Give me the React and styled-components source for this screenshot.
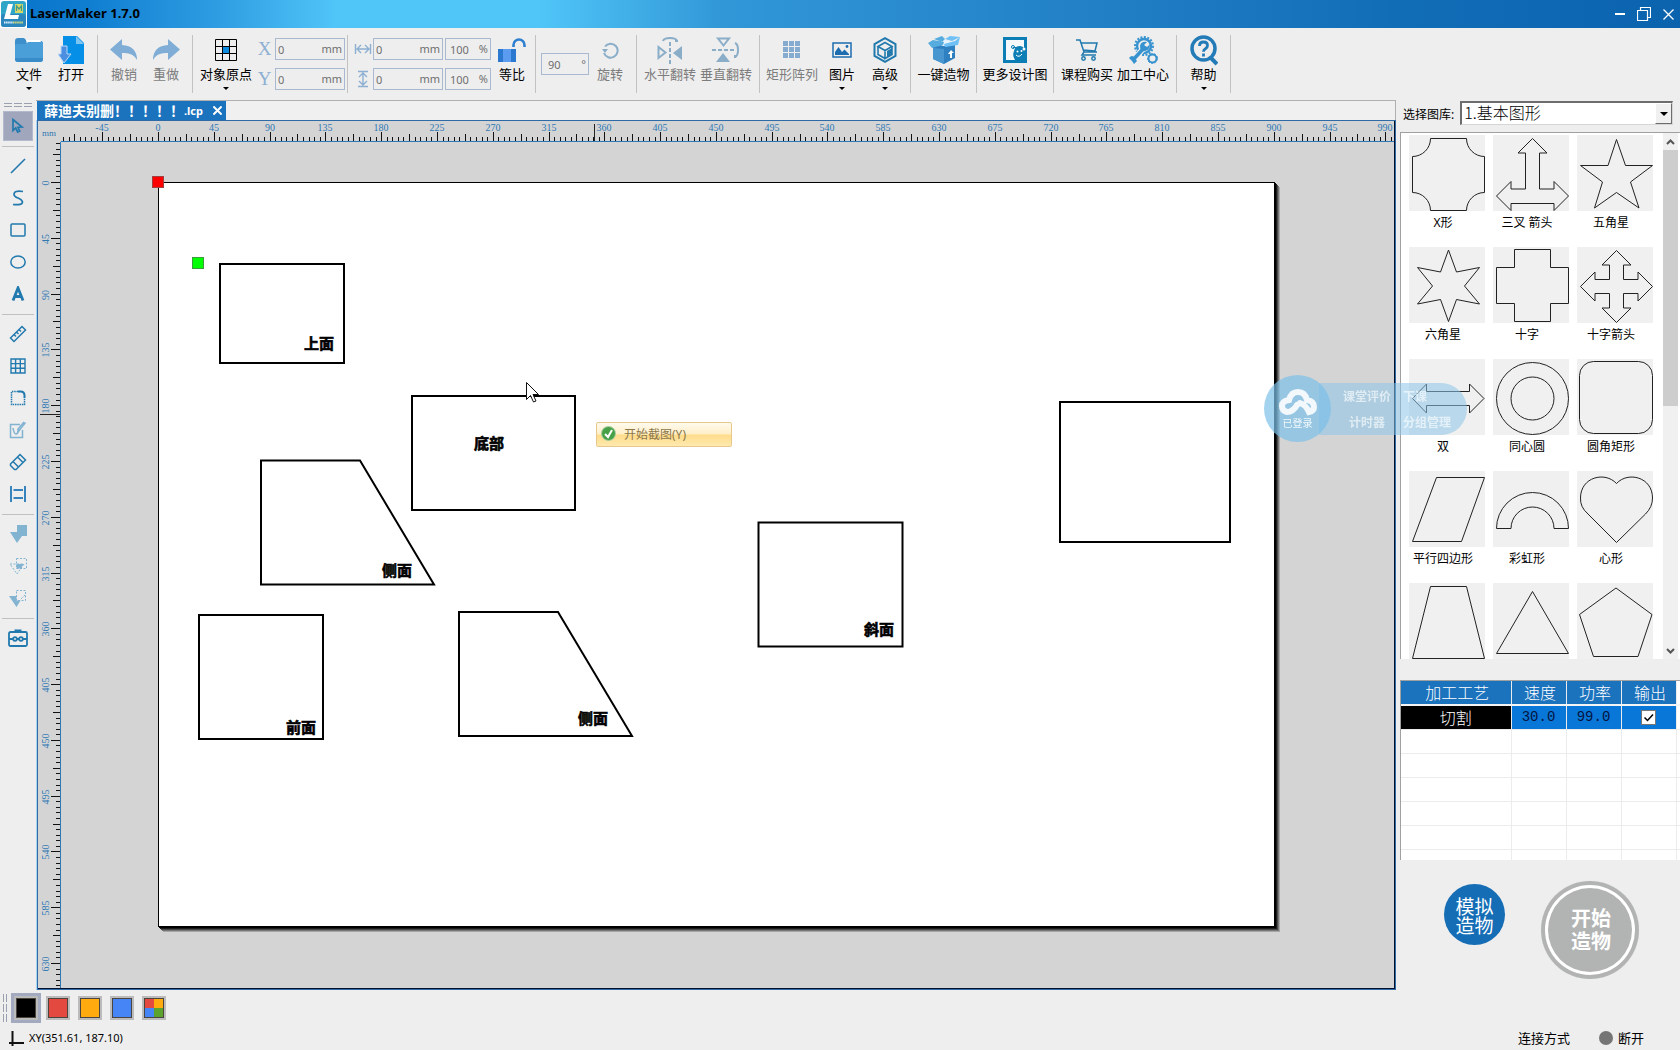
import React, { useId, useState } from "react";
import styled, { createGlobalStyle, css } from "styled-components";

const GlobalStyle = createGlobalStyle`
    * {
        box-sizing: border-box;
    }
    body {
        margin: 0;
        background: #eeeeee;
        color: #000;
        font-family: "Noto Sans", "Noto Sans CJK SC", sans-serif;
        font-size: 13px;
    }
    button, input, select {
        font-family: inherit;
        margin: 0;
    }
    button {
        border: none;
        background: none;
        padding: 0;
        color: inherit;
    }
    svg {
        display: block;
    }
`;

//page frame
const Page = styled.div`
    height: 100vh;
    min-height: 900px;
    display: flex;
    flex-direction: column;
    overflow: hidden;
`;

const Main = styled.main`
    flex: 1;
    min-height: 0;
    display: flex;
`;

//title bar
const TitleBar = styled.header`
    height: 28px;
    flex: none;
    display: flex;
    align-items: flex-start;
    background: linear-gradient(90deg, #0873ca 0%, #0f7dd0 5%, #2f9de2 13%, #50c5f8 20%, #50c6f8 32%, #3197d7 43%, #1f7dc4 68%, #126db7 83%, #0b63ae 100%);
`;

const AppIcon = styled.span`
    width: 27px;
    height: 28px;
    padding: 1px;
    background: #fff;
`;

const AppTitle = styled.h1`
    flex: 1;
    margin: 0 0 0 3px;
    font-size: 13px;
    line-height: 26px;
    font-weight: 700;
`;

const WindowButtons = styled.div`
    display: flex;
    gap: 4px;
    padding-right: 2px;
`;

const WindowButton = styled.button`
    width: 20px;
    height: 28px;
    display: grid;
    place-items: center;
    color: #fff;
`;

//tool bar
const ToolBar = styled.nav`
    height: 72px;
    flex: none;
    display: flex;
    align-items: flex-start;
    padding: 7px 0 0 3px;
`;

const ToolGroup = styled.div`
    height: 58px;
    flex: none;
    display: flex;
    padding: 0 ${({ $tight }) => ($tight ? 2 : 5)}px 0 5px;
    border-right: 1px solid #c2c2c2;
`;

const ToolButton = styled.button`
    width: ${({ $width }) => $width || 42}px;
    height: 58px;
    display: flex;
    flex-direction: column;
    align-items: center;
    white-space: nowrap;
    font-size: 13px;
    line-height: 18px;
    color: ${({ disabled }) => (disabled ? "#7d7d7d" : "#000")};
`;

const ToolIcon = styled.span`
    height: 30px;
    display: grid;
    place-items: center;
`;

const DropArrow = styled.span`
    border: 3px solid transparent;
    border-top-color: #000;
    border-bottom: none;
    margin-top: 4px;
`;

const FieldRows = styled.div`
    display: flex;
    flex-direction: column;
    gap: 8px;
    padding-top: 3px;
`;

const FieldRow = styled.div`
    display: flex;
    gap: 2px;
`;

const AxisLabel = styled.label`
    width: ${({ $width }) => $width}px;
    margin-right: -2px;
    display: grid;
    place-items: center;
    color: #8db0d2;
    font: 19px/22px "Liberation Serif", serif;
`;

const FieldBox = styled.span`
    width: ${({ $width }) => $width}px;
    height: 22px;
    display: flex;
    align-items: center;
    padding: 0 2px 0 ${({ $inset }) => $inset || 2}px;
    border: 1px solid #a9bad0;
    color: #6e6e6e;
    font-size: 11px;
    line-height: 20px;
`;

const FieldInput = styled.input`
    flex: 1;
    min-width: 0;
    width: 0;
    padding: 0;
    border: none;
    outline: none;
    background: none;
    color: inherit;
    font-size: 11px;
`;

const AngleSlot = styled.div`
    padding-top: 18px;
`;

//left strip
const SideStrip = styled.aside`
    width: 36px;
    flex: none;
    display: flex;
    flex-direction: column;
    align-items: center;
    padding-top: 2px;
`;

const SideButton = styled.button`
    width: 30px;
    height: 32px;
    display: grid;
    place-items: center;
    color: ${({ disabled }) => (disabled ? "#82b4d2" : "#2179ae")};
    ${({ $active }) =>
        $active &&
        css`
            background: #a0a6bb;
            height: 30px;
            margin: 1px 0;
            outline: 1px solid #b4bacd;
            outline-offset: -1px;
        `}
`;

const SideRule = styled.hr`
    width: 32px;
    height: 1px;
    margin: 4px 0 3px;
    border: none;
    background: #c0c0c0;
`;

const Grip = styled.div`
    height: 8px;
`;

//document
const Doc = styled.section`
    flex: 1;
    min-width: 0;
    display: flex;
    flex-direction: column;
    border-top: 1px solid #b0b0b0;
`;

const TabBar = styled.div`
    height: 19px;
    flex: none;
    display: flex;
    padding-left: 1px;
    border-right: 1px solid #b0b0b0;
    background: #f0f0f0;
`;

const Tab = styled.div`
    display: flex;
    align-items: center;
    width: 189px;
    padding: 0 4px 0 7px;
    background: #1b72bd;
    color: #fff;
    font-size: 14px;
    font-weight: 700;
    line-height: 19px;
    white-space: nowrap;
`;

const TabSuffix = styled.small`
    flex: 1;
    font-size: 11px;
`;

const DocGrid = styled.div`
    flex: 1;
    min-height: 0;
    margin-left: 1px;
    padding: 0 1px 1px 0;
    display: grid;
    grid-template: 21px 1fr / 23px 1fr;
    border: 1px solid #2e6ba6;
    background: #d4d4d4;
    box-shadow: -1px 0 #a8d4f4, inset -1px -1px #04102c;
`;

const RulerCorner = styled.div`
    padding: 4px 0 0 4px;
    color: #2e78b4;
    font: 9px/16px "Liberation Serif", serif;
`;

const HRuler = styled.svg`
    width: 100%;
    height: 21px;
    overflow: hidden;
    border-bottom: 1px solid #2e78b4;
`;

const VRuler = styled.svg`
    width: 23px;
    height: 100%;
    overflow: hidden;
    border-right: 1px solid #2e78b4;
`;

const RulerText = styled.text`
    fill: #2e78b4;
    font: 10px "Liberation Serif", serif;
    text-anchor: middle;
`;

const Workspace = styled.div`
    position: relative;
    overflow: hidden;
`;

const Paper = styled.div`
    position: absolute;
    left: 97px;
    top: 40px;
    width: 1117px;
    height: 745px;
    background: #fff;
    border: 1px solid #000;
    box-shadow: 1px 1px #000, 2px 2px #1c1c1c, 3px 3px #494949, 4px 4px #767676, 5px 5px #a6a6a6;
`;

const Drawing = styled.svg`
    width: 100%;
    height: 100%;
    overflow: visible;
`;

const ShapeLabel = styled.text`
    font: 700 15px "Noto Sans CJK SC", sans-serif;
    text-anchor: middle;
`;

const CapturePopup = styled.button`
    position: absolute;
    left: 535px;
    top: 280px;
    width: 136px;
    height: 25px;
    display: flex;
    align-items: center;
    gap: 8px;
    padding: 0 4px 2px;
    border: 1px solid #e6c88c;
    border-radius: 2px;
    background: linear-gradient(#fffaee 0%, #ffefc8 48%, #ffdc8a 52%, #ffe9ae 100%);
    color: #8c7748;
    font-size: 12px;
`;

//cloud widget that floats over the document and the panel
const CloudWidget = styled.div`
    position: fixed;
    top: 375px;
    right: 213px;
    width: 203px;
    height: 67px;
    display: flex;
    align-items: center;
    color: #f2f8fc;
    font-size: 12px;
    z-index: 2;
`;

const CloudButton = styled.button`
    width: 67px;
    height: 67px;
    flex: none;
    display: flex;
    flex-direction: column;
    align-items: center;
    justify-content: center;
    border-radius: 50%;
    background: rgba(126, 192, 234, 0.7);
    color: #f2f8fc;
    font-size: 10px;
    line-height: 14px;
    z-index: 1;
`;

const CloudMenu = styled.div`
    flex: 1;
    height: 52px;
    margin-left: -12px;
    padding-left: 12px;
    display: grid;
    grid-template-columns: 72px 1fr;
    border-radius: 0 26px 26px 0;
    background: rgba(140, 196, 232, 0.55);
`;

const CloudItem = styled.button`
    font-size: 12px;
    font-weight: 700;
    text-align: ${({ $left }) => ($left ? "left" : "center")};
    color: rgba(255, 255, 255, 0.62);
`;

//right panel
const Panel = styled.aside`
    width: 280px;
    flex: none;
    margin-left: 4px;
    padding-top: 1px;
    display: flex;
    flex-direction: column;
`;

const LibraryRow = styled.div`
    display: flex;
    height: 24px;
    gap: 6px;
    padding: 0 7px 0 3px;
    font-size: 12px;
    line-height: 28px;
    white-space: nowrap;
`;

const SelectBox = styled.div`
    flex: 1;
    height: 24px;
    display: flex;
    border: 2px solid #6d6d6d;
    border-right: 1px solid #d6d6d6;
    border-bottom: 1px solid #d6d6d6;
    background: #fff;
`;

const LibrarySelect = styled.select`
    flex: 1;
    min-width: 0;
    appearance: none;
    border: none;
    outline: none;
    background: none;
    padding: 0 0 3px 2px;
    color: #000;
    font: 300 16px/18px "Noto Sans CJK SC", sans-serif;
`;

const SelectArrow = styled.span`
    width: 17px;
    display: grid;
    place-items: center;
    background: #f0f0f0;
    border: 1px solid #fff;
    border-right-color: #6d6d6d;
    border-bottom-color: #6d6d6d;
    pointer-events: none;

    &::after {
        content: "";
        border: 4px solid transparent;
        border-top-color: #000;
        border-bottom: none;
    }
`;

const Gallery = styled.div`
    height: 527px;
    flex: none;
    margin-top: 7px;
    display: flex;
    border-top: 1px solid #a0a0a0;
    border-left: 1px solid #a0a0a0;
    background: #fff;
    overflow: hidden;
`;

const TileGrid = styled.div`
    flex: 1;
    display: grid;
    grid-template-columns: repeat(3, 84px);
    grid-auto-rows: 112px;
    padding-top: 2px;
`;

const Tile = styled.button`
    display: flex;
    flex-direction: column;
    align-items: center;
    font-size: 12px;
    line-height: 24px;
    white-space: pre;
`;

const TileArt = styled.svg`
    width: 76px;
    height: 76px;
    align-self: flex-end;
    background: #f0f0f0;
    fill: none;
    stroke: #222;
    stroke-width: 1;
`;

const ScrollBar = styled.div`
    width: 17px;
    padding-right: 2px;
    display: flex;
    flex-direction: column;
`;

const ScrollArrow = styled.button`
    height: 17px;
    display: grid;
    place-items: center;
    background: #f0f0f0;
    color: #555;
`;

const ScrollTrack = styled.div`
    flex: 1;
    background: #f0f0f0;

    &::before {
        content: "";
        display: block;
        height: 52%;
        background: #cdcdcd;
    }
`;

const CraftBox = styled.div`
    height: 180px;
    flex: none;
    margin-top: 21px;
    border-top: 1px solid #a0a0a0;
    border-left: 1px solid #a0a0a0;
    background: #fff;
    overflow: hidden;
`;

const CraftTable = styled.table`
    width: 100%;
    table-layout: fixed;
    border-collapse: collapse;
    font: 300 16px/22px "Noto Sans CJK SC", sans-serif;
    text-align: center;

    th, td {
        height: 24px;
        padding: 0;
        border-right: 1px solid #ececec;
        border-bottom: 1px solid #ececec;
    }
    th {
        padding: 0 0 2px 3px;
        line-height: 20px;
        font-weight: 300;
        color: #fff;
        background: #1b72bd;
        border-bottom: 2px solid #f4f4f4;
    }
    th:last-child, td:last-child {
        background: #fff;
        border-right: none;
    }
`;

const CraftCell = styled.td`
    background: ${({ $dark }) => ($dark ? "#000" : "#0877d8")};
    color: ${({ $dark }) => ($dark ? "#fff" : "#051440")};
    font-family: ${({ $dark }) => ($dark ? "inherit" : '"Liberation Mono", monospace')};
    font-size: ${({ $dark }) => ($dark ? 16 : 14)}px;
    font-weight: 300;
`;

const OutputCheck = styled.input`
    appearance: none;
    display: block;
    width: 13px;
    height: 13px;
    margin: 0 auto;
    background: #fff;
    outline: 1px solid #777;

    &:checked {
        background: #fff url("data:image/svg+xml,%3Csvg xmlns='http://www.w3.org/2000/svg' viewBox='0 0 13 13'%3E%3Cpath d='M2.5 6.5l3 3 5.500-6' fill='none' stroke='%23000' stroke-width='1.500'/%3E%3C/svg%3E");
    }
`;

const ActionRow = styled.div`
    display: flex;
    align-items: flex-start;
    gap: 36px;
    padding: 21px 0 0 44px;
`;

const SimulateButton = styled.button`
    width: 61px;
    height: 61px;
    margin-top: 3px;
    border-radius: 50%;
    background: #146db5;
    color: #fff;
    font: 400 19px/19px "Noto Sans CJK SC", sans-serif;
`;

const StartButton = styled.button`
    width: 98px;
    height: 98px;
    padding: 0 0 3px 2px;
    border-radius: 50%;
    background: #b2b4b4;
    box-shadow: inset 0 0 0 4px #b2b4b4, inset 0 0 0 7px #fff;
    color: #fff;
    font: 700 20px/23px "Noto Sans CJK SC", sans-serif;
`;

//bottom bars
const PaletteBar = styled.div`
    height: 38px;
    flex: none;
    display: flex;
    align-items: center;
    gap: 2px;
    padding: 0 0 2px 3px;
`;

const PaletteGrip = styled.span`
    width: 6px;
    height: 28px;
`;

const SwatchButton = styled.button`
    width: 30px;
    height: 30px;
    padding: 3px;
    background: ${({ $active }) => ($active ? "#a3a9be" : "none")};
`;

const Swatch = styled.span`
    display: block;
    width: 24px;
    height: 24px;
    border: 2px solid #bbb;
    background: ${({ $paint }) => $paint};
    box-shadow: inset 0 0 0 1px #4a453f;
`;

const StatusBar = styled.footer`
    height: 22px;
    flex: none;
    display: flex;
    align-items: center;
    padding: 0 36px 2px 9px;
    font-size: 13px;
    line-height: 18px;
`;

const Coordinates = styled.span`
    flex: 1;
    padding-left: 5px;
    font-size: 11px;
`;

const StatusDot = styled.i`
    width: 14px;
    height: 14px;
    margin: 0 5px 0 29px;
    border-radius: 50%;
    background: #757575;
`;

//ruler data: 45 mm take 55.79 px, with ten ticks between two numbers
const STEP = 5.579;

function Ticks({ vertical, origin, from, to, cursor }) {
    const items = [];
    for (let i = from; i <= to; i++) {
        const at = Math.round(origin + i * STEP) + 0.5;
        const len = i % 10 === 0 ? 9 : i % 5 === 0 ? 7 : 4;
        items.push(vertical ? `M${22 - len} ${at}H22` : `M${at} ${20 - len}V20`);
    }
    const labels = [];
    for (let i = Math.ceil(from / 10); i * 10 <= to; i++) {
        const at = Math.round(origin + i * 10 * STEP);
        labels.push(
            vertical ? (
                <RulerText key={i} transform={`translate(11 ${at + 1}) rotate(-90)`}>{i * 45}</RulerText>
            ) : (
                <RulerText key={i} x={at} y={10}>{i * 45}</RulerText>
            )
        );
    }
    return (
        <>
            <path d={items.join("")} stroke="#111" fill="none" />
            <path d={vertical ? `M2 ${cursor}H22` : `M${cursor} 3V20`} stroke="#222" />
            {labels}
        </>
    );
}

//icons
const blue = "#2179ae";
const pale = "#8aadc8";

const Icon = ({ w = 24, h = w, box, children, ...rest }) => (
    <svg width={w} height={h} viewBox={box || `0 0 ${w} ${h}`} fill="none" stroke="currentColor" aria-hidden="true" {...rest}>
        {children}
    </svg>
);

const LogoIcon = () => (
    <Icon w={25} h={26} stroke="none">
        <rect width="25" height="26" rx="3" fill="#2fa5c8" />
        <rect y="13" width="25" height="13" rx="3" fill="#2b86bd" />
        <path d="M7 3h5l-3 11h9l-1 4H3z" fill="#fff" />
        <rect x="14" y="3" width="8" height="9" fill="#d6d66a" />
        <path d="M15.500 10V5l2.500 3 2.500-3v5" stroke="#3f9a8a" strokeWidth="1.200" />
        <path d="M3 21.500h9" stroke="#dff4ff" strokeWidth="2" strokeDasharray="1.500 .6" />
        <path d="M12 21.500h10" stroke="#d8dc7a" strokeWidth="2" strokeDasharray="1.500 .6" />
    </Icon>
);

const FolderIcon = () => (
    <Icon w={28} h={24} stroke="none">
        <path d="M0 3q0-3 3-3h6l3 3h14q2 0 2 3v6H0z" fill="#3d8fcb" />
        <path d="M11 2h14l2 4H12z" fill="#fff" />
        <path d="M0 8q0-2 2-2h9l2-2h13q2 0 2 2v15q0 3-3 3H3q-3 0-3-3z" fill="#4a9fd8" />
        <path d="M0 20h28v1q0 3-3 3H3q-3 0-3-3z" fill="#3a8cc8" />
    </Icon>
);

const OpenIcon = () => (
    <Icon w={26} h={28} stroke="none">
        <path d="M5 0h14l7 7v21H5z" fill="#068fe6" />
        <path d="M18 0l8 8h-8z" fill="#7cc4f2" />
        <path d="M3 10h6v8h4L6 27l-6-9h3z" fill="#4c8ee0" stroke="#b8d8f6" />
    </Icon>
);

const UndoIcon = ({ flip }) => (
    <Icon w={28} h={22} stroke="none" style={{ transform: flip ? "scaleX(-1)" : "none" }}>
        <path d="M12 0v6q15 1 15 15-4-8-15-7v7L0 10.500z" fill="#80add5" />
    </Icon>
);

const OriginIcon = () => (
    <Icon w={22}>
        <rect x="7.500" y="7.500" width="7" height="7" fill="#0c8ce0" stroke="none" />
        <path d="M.5.5h21v21H.5zM7.500.5v21M14.500.5v21M.5 7.500h21M.5 14.500h21" />
    </Icon>
);

const WidthIcon = ({ vertical }) => (
    <Icon w={18} style={{ transform: vertical ? "rotate(90deg)" : "none" }} stroke="#8db0d2" strokeWidth="1.400">
        <path d="M1.500 4v10M16.500 4v10M3 9h12M7 5L3 9l4 4M11 5l4 4-4 4" />
    </Icon>
);

const LockIcon = () => (
    <Icon w={28} h={24}>
        <path d="M15.500 9V7a5.500 5.500 0 0 1 11 0v2" stroke="#2f7fd0" strokeWidth="2.600" />
        <rect y="11" width="18" height="13" fill="#2a78d0" stroke="none" />
        <rect x="5" y="11" width="8" height="13" fill="#5c9cf0" stroke="none" />
    </Icon>
);

const RotateIcon = () => (
    <Icon w={18} stroke={pale} strokeWidth="2">
        <path d="M4 5.500A7 7 0 1 1 3 12" />
        <path d="M1 8h6L4 12z" fill={pale} stroke="none" />
    </Icon>
);

const FlipIcon = ({ vertical }) => (
    <Icon w={28} stroke={pale} strokeWidth="2" style={{ transform: vertical ? "rotate(90deg)" : "none" }}>
        <path d="M2.500 11v11l7-5.500z" />
        <path d="M26 10v14l-9-7z" fill={pale} stroke="none" />
        <path d="M14 6v22" strokeDasharray="4 2" />
        <path d="M7 5q1-3 7-3t7 3M19 5h3" />
    </Icon>
);

const ArrayIcon = () => (
    <Icon w={18} stroke="none" fill="#86abd0">
        {[0, 6, 12].map((y) => [0, 6, 12].map((x) => <rect key={x + "-" + y} x={x} y={y} width="5" height="5" />))}
    </Icon>
);

const PictureIcon = () => (
    <Icon w={20} h={16} stroke="#1e6cb0">
        <rect x="1" y="1" width="18" height="14" strokeWidth="1.500" />
        <path d="M3 13V10l3.500-5 3.500 5 2.500-2.500L17 12v1z" fill="#1e6cb0" stroke="none" />
        <circle cx="15" cy="4.500" r="1.400" fill="#1e6cb0" stroke="none" />
    </Icon>
);

const CubeIcon = () => (
    <Icon w={24} h={26} stroke={blue} strokeWidth="2">
        <path d="M12 1.200l10.500 5.800v12L12 24.800 1.500 19V7z" />
        <path d="M5 9.500l7-4 7 4-7 4zM5 9.500v8l7 4M12 13.500v8l7-4v-8" strokeWidth="1.600" />
        <path d="M14 14l5-3v6l-5 3z" fill={blue} stroke="none" />
    </Icon>
);

const BoxIcon = () => (
    <Icon w={32} h={28} stroke="none">
        <path d="M5 7l11 3 11-3v15l-11 6-11-5z" fill="#2f80c0" />
        <path d="M6 7l10-4 10 4-10 3z" fill="#e8f3fb" />
        <path d="M5 4L0 7l4 5 11-3 1-3zM6 3l8-3 3 3-3 3z" fill="#56acde" />
        <path d="M27 5l5-4-2 8-13 2-1-3zM17 3l5-3 10 1-8 4z" fill="#6fc1f5" />
        <path d="M5 12l11 1v15L5 23z" fill="#4796cf" />
        <path d="M23 14l3 3h-2v5h-2v-4h-2z" fill="#fff" />
    </Icon>
);

const MoreIcon = () => (
    <Icon w={24} h={26} stroke="none">
        <rect width="24" height="26" fill="#0c7db5" />
        <path d="M3 3h18v8q-2-2-4-2-5 0-6 5-2 5 1 9H3z" fill="#f4f8fb" />
        <path d="M10 10.500h5" stroke="#0c7db5" />
        <circle cx="10" cy="10" r="1.500" stroke="#0c7db5" />
        <circle cx="21" cy="12" r="1.500" fill="#f4f8fb" />
        <circle cx="14.500" cy="14.500" r="1" fill="#fff" />
        <circle cx="18.500" cy="14" r="1" fill="#fff" />
        <path d="M13 18q3 3 6-1" stroke="#fff" />
    </Icon>
);

const CartIcon = () => (
    <Icon w={23} h={22} stroke="#2179ae" strokeWidth="1.500">
        <path d="M0 1h4l4 12h13M5 4h16l-2 8L7 11M8 13l-2 3h14" />
        <circle cx="7.500" cy="19.500" r="1.700" />
        <circle cx="17.500" cy="19.500" r="1.700" />
    </Icon>
);

const GearIcon = () => (
    <Icon w={29} h={28} stroke="#3793cf">
        <circle cx="15" cy="10" r="9" strokeWidth="2" strokeDasharray="2 1.500" />
        <circle cx="15" cy="10" r="7" strokeWidth="2.500" />
        <path d="M4 24L14 13" strokeWidth="6" stroke="#eee" />
        <path d="M4 24L14 13" strokeWidth="3.500" />
        <path d="M11 10q0 6 5 5t5-7l-3 3-3-2 3-3q-6-1-7 4zM0 22q3-4 6 0l2 3-3 3-2-3z" fill="#3793cf" stroke="none" />
        <circle cx="23.500" cy="22.500" r="4" fill="#eee" strokeWidth="2" />
        <circle cx="23.500" cy="22.500" r="5" strokeDasharray="2 1.500" />
    </Icon>
);

const HelpIcon = () => (
    <Icon w={28} h={31} stroke="#237bb8" strokeWidth="3.500">
        <circle cx="13.500" cy="13.500" r="11.500" />
        <path d="M21 23l6 6" strokeWidth="4" />
        <path d="M9.500 11q0-4 4-4t4 3.500q0 2-2 3.200t-2 3M13.500 18.500v3" strokeWidth="2.800" />
    </Icon>
);

const MinimizeIcon = () => (
    <Icon w={10}><path d="M0 5h10" strokeWidth="2" /></Icon>
);

const RestoreIcon = () => (
    <Icon w={14}><path d="M3.500 3.500v-3h10v10h-3M.5 3.500h10v10H.5z" strokeWidth="1.200" /></Icon>
);

const CloseIcon = ({ size = 11, weight = 1.3 }) => (
    <Icon w={size} box="0 0 11 11"><path d="M.5.5l10 10M10.500.5l-10 10" strokeWidth={weight} /></Icon>
);

const sideIcons = {
    pointer: <Icon w={16} strokeWidth="1.700"><path d="M3 1.500v11l2.700-2.500 2 4 2-1-1.800-3.800L12 9z" /></Icon>,
    line: <Icon w={16} strokeWidth="1.600"><path d="M1 15L15 1" /></Icon>,
    curve: <Icon w={16} strokeWidth="1.700"><path d="M13 1.500Q4 0 4 4.500q0 2 4 3.500t4.500 4q0 3.500-9.500 2.500" /></Icon>,
    rect: <Icon w={16} strokeWidth="1.500"><rect x="1" y="2" width="14" height="12" rx="1" /></Icon>,
    ellipse: <Icon w={16} strokeWidth="1.500"><ellipse cx="8" cy="8" rx="7.200" ry="6" /></Icon>,
    text: <Icon w={16} strokeWidth="2.800"><path d="M3 14.500L8 2l5 12.500M5 10.500h6" /></Icon>,
    ruler: <Icon w={18} strokeWidth="1.500"><path d="M1.500 13L13 1.500 16.500 5 5 16.500zM5.500 10l1.500 1.500M8 7.500L9.500 9M10.500 5L12 6.500" /></Icon>,
    grid: <Icon w={16} strokeWidth="1.400"><path d="M1 1h14v14H1zM1 5.600h14M1 10.300h14M5.600 1v14M10.300 1v14" /></Icon>,
    corner: <Icon w={16}><path d="M8 1.500h2.500q4 0 4 4V8" strokeWidth="2" /><path d="M8 1.500H1.500v13h13V8" strokeWidth="1.500" strokeDasharray="1.500 .8" /></Icon>,
    edit: <Icon w={18} strokeWidth="1.500"><path d="M11 3.500H1.500v13h12V9M4 7q1 6 3 6t3-5" /><path d="M16.500 1.500L9 11M9 11V8l6-7" /></Icon>,
    eraser: <Icon w={18} strokeWidth="1.500"><path d="M1.500 11L11 1.500 16.500 7 7 16.500H5.500L1.500 12.500zM4 8.500L9.500 14M8.500 4L14 9.500" /></Icon>,
    spacing: <Icon w={16} stroke="#3683bd" strokeWidth="2"><path d="M1 0v16M15 0v16M3.500 4h9.500M3.500 12h9.500" /></Icon>,
    union: <Icon w={18} stroke="none" fill="currentColor"><path d="M8 0h10v11h-5l-5 7L1 7h7z" /></Icon>,
    intersect: <Icon w={18} strokeDasharray="2 1.500"><path d="M7.500 1.500h10v10h-10zM1 7h14L8 17z" /><path d="M7.500 7H15l-3.500 4.500h-4z" fill="currentColor" stroke="none" /></Icon>,
    subtract: <Icon w={18}><path d="M7.500 1.500h9v10h-9zM16 6l-6 6" strokeDasharray="2 1.500" /><path d="M0 7h7.500v4.500h4L7.500 18z" fill="currentColor" stroke="none" /></Icon>,
    toolbox: <Icon w={20} h={18} strokeWidth="1.800"><rect x="1" y="3" width="18" height="14" rx="1.500" /><path d="M6.500 1.500h7M1 10h4M9 10h2M15 10h4" /><circle cx="7" cy="10" r="1.800" /><circle cx="13" cy="10" r="1.800" /></Icon>,
};

const sideGroups = [
    [["pointer", "选择"]],
    [["line", "直线"], ["curve", "曲线"], ["rect", "矩形"], ["ellipse", "椭圆"], ["text", "文字"]],
    [["ruler", "测量"], ["grid", "网格"], ["corner", "圆角"], ["edit", "编辑", true], ["eraser", "橡皮"], ["spacing", "间距"]],
    [["union", "并集", true], ["intersect", "交集", true], ["subtract", "差集", true]],
    [["toolbox", "工具箱"]],
];

const tiles = [
    ["X形", <path d="M21.500 3.500h36a18 18 0 0 0 18 18v36a18 18 0 0 0-18 18h-36a18 18 0 0 0-18-18v-36a18 18 0 0 0 18-18z" />],
    ["三叉 箭头", <path d="M39.500 3.500L54 18h-7.500v36H61v-7.500L75.500 61 61 75.500V68.500H18v7L3.500 61 18 46.500V54h14.500V18H25z" />],
    ["五角星", <path d="M39.500 4.500l9 26H75.500L53.500 47 62 73 39.500 57.500 17.500 73 25.500 47 3.500 30.500H31z" />],
    ["六角星", <path d="M39.500 3l8 22 23-4.500L55.500 39l15 18-23-4.500-8 22-8-22L8.500 57l15-18-15-18.500 23 4.500z" />],
    ["十字", <path d="M21.500 2.500h36v18h18v36h-18v18h-36v-18h-18v-36h18z" />],
    ["十字箭头", <path d="M39.500 3.500L54 18h-7.500v14.500H61V25l14.500 14.500L61 54v-7.500H46.500V61H54L39.500 75.500 25 61h7.500V46.500H18V54L3.500 39.500 18 25v7.500h14.500V18H25z" />],
    ["双", <path d="M3.500 39.500L17.500 25v7.500h43V25L75 39.500 60.500 54v-7.500h-43V54z" />],
    ["同心圆", <><circle cx="39.500" cy="39.500" r="36" /><circle cx="39.500" cy="39.500" r="21.500" /></>],
    ["圆角矩形", <rect x="2.500" y="2.500" width="73" height="72" rx="14" />],
    ["平行四边形", <path d="M27.500 6.500h48l-23 64h-49z" />],
    ["彩虹形", <path d="M3.500 57.500a36 36 0 0 1 72 0H61a21.500 21.500 0 0 0-43 0z" />],
    ["心形", <path d="M39.500 12.500C51 0 75.500 6 75.500 27q0 9-7 16l-29 28.500L11 43q-8-7-7.500-16C3.500 6 28 0 39.500 12.500z" />],
    ["", <path d="M21.500 3.500h36l18 72h-72z" />],
    ["", <path d="M39.500 8.500l36 62h-72z" />],
    ["", <path d="M39 5l36 26.500-14 42H16.500l-14-42z" />],
];

const crafts = [{ name: "切割", speed: "30.0", power: "99.0" }];

const swatches = [
    ["黑色", "#000"],
    ["红色", "#e4493f"],
    ["橙色", "#ffaa0e"],
    ["蓝色", "#4585f5"],
    ["更多颜色", "conic-gradient(#ffaa0e 25%, #5ca32e 0 50%, #4585f5 0 75%, #e4493f 0)"],
];

function Tool({ icon, label, width, menu, disabled }) {
    return (
        <ToolButton type="button" $width={width} disabled={disabled}>
            <ToolIcon>{icon}</ToolIcon>
            {label}
            {menu && <DropArrow />}
        </ToolButton>
    );
}

function Field({ id, label, value, unit, width = 70, inset }) {
    return (
        <FieldBox $width={width} $inset={inset}>
            <FieldInput id={id} aria-label={label} defaultValue={value} />
            {unit}
        </FieldBox>
    );
}

function TopTools() {
    const id = useId();
    return (
        <ToolBar>
            <ToolGroup>
                <Tool icon={<FolderIcon />} label="文件" menu />
                <Tool icon={<OpenIcon />} label="打开" />
            </ToolGroup>
            <ToolGroup>
                <Tool icon={<UndoIcon />} label="撤销" disabled />
                <Tool icon={<UndoIcon flip />} label="重做" disabled />
            </ToolGroup>
            <ToolGroup $tight>
                <Tool icon={<OriginIcon />} label="对象原点" width={56} menu />
                <FieldRows>
                    <FieldRow>
                        <AxisLabel $width={21} htmlFor={id + "x"}>X</AxisLabel>
                        <Field id={id + "x"} value="0" unit="mm" />
                    </FieldRow>
                    <FieldRow>
                        <AxisLabel $width={21} htmlFor={id + "y"}>Y</AxisLabel>
                        <Field id={id + "y"} value="0" unit="mm" />
                    </FieldRow>
                </FieldRows>
            </ToolGroup>
            <ToolGroup $tight>
                <FieldRows>
                    <FieldRow>
                        <AxisLabel $width={20} htmlFor={id + "w"}><WidthIcon /></AxisLabel>
                        <Field id={id + "w"} value="0" unit="mm" />
                        <Field label="宽度比例" value="100" unit="%" width={46} inset={4} />
                    </FieldRow>
                    <FieldRow>
                        <AxisLabel $width={20} htmlFor={id + "h"}><WidthIcon vertical /></AxisLabel>
                        <Field id={id + "h"} value="0" unit="mm" />
                        <Field label="高度比例" value="100" unit="%" width={46} inset={4} />
                    </FieldRow>
                </FieldRows>
                <Tool icon={<LockIcon />} label="等比" />
            </ToolGroup>
            <ToolGroup>
                <AngleSlot>
                    <Field label="角度" value="90" unit="°" width={48} inset={6} />
                </AngleSlot>
                <Tool icon={<RotateIcon />} label="旋转" disabled />
            </ToolGroup>
            <ToolGroup>
                <Tool icon={<FlipIcon />} label="水平翻转" width={56} disabled />
                <Tool icon={<FlipIcon vertical />} label="垂直翻转" width={56} disabled />
            </ToolGroup>
            <ToolGroup>
                <Tool icon={<ArrayIcon />} label="矩形阵列" width={54} disabled />
                <Tool icon={<PictureIcon />} label="图片" width={46} menu />
                <Tool icon={<CubeIcon />} label="高级" width={40} menu />
            </ToolGroup>
            <ToolGroup>
                <Tool icon={<BoxIcon />} label="一键造物" width={55} />
            </ToolGroup>
            <ToolGroup>
                <Tool icon={<MoreIcon />} label="更多设计图" width={66} />
            </ToolGroup>
            <ToolGroup>
                <Tool icon={<CartIcon />} label="课程购买" width={56} />
                <Tool icon={<GearIcon />} label="加工中心" width={56} />
            </ToolGroup>
            <ToolGroup>
                <Tool icon={<HelpIcon />} label="帮助" width={43} menu />
            </ToolGroup>
        </ToolBar>
    );
}

//coordinates in the drawing are pixels from the corner of the sheet
function Sheet() {
    return (
        <Paper>
            <Drawing>
                <g fill="none" stroke="#000" strokeWidth="2">
                    <rect x="61" y="81" width="124" height="99" />
                    <rect x="253" y="213" width="163" height="114" />
                    <path d="M102 277.500h99l74 124H102z" />
                    <rect x="40" y="432" width="124" height="124" />
                    <path d="M300 429h99l74 124H300z" />
                    <rect x="599.500" y="339.500" width="144" height="124" />
                    <rect x="901" y="219" width="170" height="140" />
                </g>
                <g stroke="#000" strokeWidth=".6">
                    <ShapeLabel x="160" y="166">上面</ShapeLabel>
                    <ShapeLabel x="330" y="266">底部</ShapeLabel>
                    <ShapeLabel x="238" y="393">侧面</ShapeLabel>
                    <ShapeLabel x="142" y="550">前面</ShapeLabel>
                    <ShapeLabel x="434" y="541">侧面</ShapeLabel>
                    <ShapeLabel x="720" y="452">斜面</ShapeLabel>
                </g>
                <rect x="-6.500" y="-6.500" width="11" height="11" fill="#f00" stroke="#a04040" />
                <rect x="33.500" y="74.500" width="11" height="11" fill="#0f0" stroke="#3c9c3c" />
                <path d="M367.500 199.500v17l4-4 3 6.500 2.500-1-3-6.500h5.500z" fill="#fff" stroke="#111" />
            </Drawing>
        </Paper>
    );
}

const App = () => {
    const [color, setColor] = useState(0);
    const [output, setOutput] = useState(true);

    return (
        <Page>
            <GlobalStyle />
            <TitleBar>
                <AppIcon><LogoIcon /></AppIcon>
                <AppTitle>LaserMaker 1.7.0</AppTitle>
                <WindowButtons>
                    <WindowButton aria-label="最小化"><MinimizeIcon /></WindowButton>
                    <WindowButton aria-label="还原"><RestoreIcon /></WindowButton>
                    <WindowButton aria-label="关闭"><CloseIcon /></WindowButton>
                </WindowButtons>
            </TitleBar>
            <TopTools />
            <Main>
                <SideStrip>
                    <Grip>
                        <Icon w={28} h={8} stroke="#9aa0b0">
                            <path d="M0 1.500h28M0 4.500h28" strokeDasharray="8 2" />
                        </Icon>
                    </Grip>
                    {sideGroups.map((group, index) => (
                        <React.Fragment key={index}>
                            {index > 0 && <SideRule />}
                            {group.map(([name, label, disabled]) => (
                                <SideButton key={name} aria-label={label} disabled={disabled} $active={name === "pointer"}>
                                    {sideIcons[name]}
                                </SideButton>
                            ))}
                        </React.Fragment>
                    ))}
                </SideStrip>
                <Doc>
                    <TabBar>
                        <Tab>
                            薛迪夫别删！！！！！
                            <TabSuffix>.lcp</TabSuffix>
                            <button type="button" aria-label="关闭文件"><CloseIcon size={9} weight={2.4} /></button>
                        </Tab>
                    </TabBar>
                    <DocGrid>
                        <RulerCorner>mm</RulerCorner>
                        <HRuler><Ticks origin={97} from={-17} to={221} cursor={533.5} /></HRuler>
                        <VRuler><Ticks vertical origin={40} from={-7} to={144} cursor={272.5} /></VRuler>
                        <Workspace>
                            <Sheet />
                            <CapturePopup type="button">
                                <Icon w={15} stroke="#fff" strokeWidth="2">
                                    <circle cx="7.500" cy="7.500" r="7" fill="#46a046" stroke="#a8cfa0" strokeWidth="1" />
                                    <path d="M4 8l3 3 4-7" />
                                </Icon>
                                开始截图(Y)
                            </CapturePopup>
                        </Workspace>
                    </DocGrid>
                </Doc>
                <Panel>
                    <LibraryRow>
                        <label htmlFor="library">选择图库:</label>
                        <SelectBox>
                            <LibrarySelect id="library">
                                <option>1.基本图形</option>
                            </LibrarySelect>
                            <SelectArrow />
                        </SelectBox>
                    </LibraryRow>
                    <Gallery>
                        <TileGrid>
                            {tiles.map(([name, art], index) => (
                                <Tile key={index} type="button">
                                    <TileArt>{art}</TileArt>
                                    {name}
                                </Tile>
                            ))}
                        </TileGrid>
                        <ScrollBar>
                            <ScrollArrow aria-label="向上"><Icon w={9} h={6} strokeWidth="2"><path d="M1 5l3.500-3.500L8 5" /></Icon></ScrollArrow>
                            <ScrollTrack />
                            <ScrollArrow aria-label="向下"><Icon w={9} h={6} strokeWidth="2"><path d="M1 1l3.500 3.500L8 1" /></Icon></ScrollArrow>
                        </ScrollBar>
                    </Gallery>
                    <CraftBox>
                        <CraftTable>
                            <colgroup>
                                <col width="110" />
                                <col width="55" />
                                <col width="55" />
                                <col width="55" />
                                <col />
                            </colgroup>
                            <thead>
                                <tr>
                                    <th>加工工艺</th>
                                    <th>速度</th>
                                    <th>功率</th>
                                    <th>输出</th>
                                    <th aria-hidden="true" />
                                </tr>
                            </thead>
                            <tbody>
                                {crafts.map((craft) => (
                                    <tr key={craft.name}>
                                        <CraftCell $dark>{craft.name}</CraftCell>
                                        <CraftCell>{craft.speed}</CraftCell>
                                        <CraftCell>{craft.power}</CraftCell>
                                        <CraftCell>
                                            <OutputCheck
                                                type="checkbox"
                                                aria-label="输出"
                                                checked={output}
                                                onChange={() => setOutput(!output)}
                                            />
                                        </CraftCell>
                                        <td />
                                    </tr>
                                ))}
                                {[1, 2, 3, 4, 5, 6].map((row) => (
                                    <tr key={row}>
                                        <td /><td /><td /><td /><td />
                                    </tr>
                                ))}
                            </tbody>
                        </CraftTable>
                    </CraftBox>
                    <ActionRow>
                        <SimulateButton type="button">模拟<br />造物</SimulateButton>
                        <StartButton type="button">开始<br />造物</StartButton>
                    </ActionRow>
                </Panel>
            </Main>
            <PaletteBar>
                <PaletteGrip>
                    <Icon w={5} h={28} stroke="#9aa0b0">
                        <path d="M.5 0v28M3.500 0v28" strokeDasharray="8 2" />
                    </Icon>
                </PaletteGrip>
                {swatches.map(([name, paint], index) => (
                    <SwatchButton key={name} aria-label={name} $active={color === index} onClick={() => setColor(index)}>
                        <Swatch $paint={paint} />
                    </SwatchButton>
                ))}
            </PaletteBar>
            <StatusBar>
                <Icon w={15} stroke="#111" strokeWidth="2"><path d="M3.500 0v15M0 12h15" /></Icon>
                <Coordinates>XY(351.61, 187.10)</Coordinates>
                连接方式
                <StatusDot />
                断开
            </StatusBar>
            <CloudWidget>
                <CloudButton type="button">
                    <Icon w={38} h={28} stroke="currentColor" strokeWidth="6" strokeLinecap="round">
                        <path d="M18 17q-4 7-10 7-5-1-5-6 0-5 7-6 2-8 9-8t9 8q7 1 7 7 0 4-5 5-3-7-9-9" />
                    </Icon>
                    已登录
                </CloudButton>
                <CloudMenu>
                    <CloudItem>课堂评价</CloudItem>
                    <CloudItem $left>下课</CloudItem>
                    <CloudItem>计时器</CloudItem>
                    <CloudItem $left>分组管理</CloudItem>
                </CloudMenu>
            </CloudWidget>
        </Page>
    );
};

export default App;
